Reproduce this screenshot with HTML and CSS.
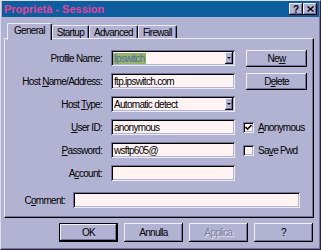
FILE: index.html
```html
<!DOCTYPE html>
<html>
	<head>
		<meta charset="UTF-8">
		<title>Proprietà - Session</title>
		<link rel="stylesheet" href="styles.css">
	</head>
	<body>
		<div class="window">
			<div class="titlebar">
				<span class="title">Proprietà - Session</span>
				<span class="capbtn">?</span>
				<span class="capbtn">
					<svg width="7" height="6" viewBox="0 0 7 6"><path d="M0.5 0.5 L6.5 5.5 M6.5 0.5 L0.5 5.5" stroke="#000" stroke-width="1.4" fill="none"/></svg>
				</span>
			</div>

			<div class="tabs">
				<span class="tab active">General</span>
				<span class="tab">Startup</span>
				<span class="tab">Advanced</span>
				<span class="tab">Firewall</span>
			</div>

			<div class="panel">
				<div class="row">
					<span class="lbl">Profile Name:</span>
					<div class="field combo"><span class="sel">Ipswitch</span><span class="drop"></span></div>
					<span class="btn side">Ne<u>w</u></span>
				</div>
				<div class="row">
					<span class="lbl">Host <u>N</u>ame/Address:</span>
					<div class="field">ftp.ipswitch.com</div>
					<span class="btn side">D<u>e</u>lete</span>
				</div>
				<div class="row">
					<span class="lbl">Host <u>T</u>ype:</span>
					<div class="field combo">Automatic detect<span class="drop"></span></div>
				</div>
				<div class="row">
					<span class="lbl"><u>U</u>ser ID:</span>
					<div class="field">anonymous</div>
					<span class="check">
						<span class="box"><svg width="7" height="7" viewBox="0 0 7 7"><path d="M0.5 3 L2.5 5.2 L6.5 1" stroke="#000" stroke-width="1.6" fill="none"/></svg></span>
						<span><u>A</u>nonymous</span>
					</span>
				</div>
				<div class="row">
					<span class="lbl"><u>P</u>assword:</span>
					<div class="field">wsftp605@</div>
					<span class="check">
						<span class="box"></span>
						<span>Sa<u>v</u>e Pwd</span>
					</span>
				</div>
				<div class="row">
					<span class="lbl">A<u>c</u>count:</span>
					<div class="field"></div>
				</div>
				<div class="row comment">
					<span class="lbl">C<u>o</u>mment:</span>
					<div class="field"></div>
				</div>
			</div>

			<div class="buttons">
				<span class="btn default">OK</span>
				<span class="btn">Annulla</span>
				<span class="btn disabled">Applica</span>
				<span class="btn">?</span>
			</div>
		</div>
	</body>
</html>
```

FILE: styles.css
```css
* {
	box-sizing: border-box;
}
html, body {
	margin: 0;
	padding: 0;
}
body {
	background: #b2b2d2;
	font-family: "Liberation Sans", sans-serif;
	font-size: 10px;
	letter-spacing: -0.7px;
	color: #000;
}
u {
	text-decoration: underline;
	text-underline-offset: 1px;
}

.window {
	width: 321px;
	height: 250px;
	padding: 0 1px 1px 1px;
	border: 1px solid;
	border-color: #dcdcee #24243a #24243a #dcdcee;
	box-shadow: inset -1px -1px #74749a;
	display: flex;
	flex-direction: column;
}

/* caption */
.titlebar {
	height: 16px;
	flex: none;
	background: #0c5e9e;
	display: flex;
	align-items: center;
	padding: 0 2px 0 2px;
}
.title {
	flex: 1;
	font-weight: bold;
	font-size: 11px;
	letter-spacing: 0;
	color: #e4449e;
}
.capbtn {
	width: 14px;
	height: 12px;
	display: flex;
	align-items: center;
	justify-content: center;
	background: #b2b2d2;
	font-weight: bold;
	font-size: 10px;
	letter-spacing: 0;
	box-shadow: inset -1px -1px #000, inset 1px 1px #f0f0fa, inset -2px -2px #74749a;
}

/* tabs */
.tabs {
	height: 21px;
	flex: none;
	display: flex;
	align-items: flex-end;
	padding-left: 5px;
}
.tab {
	height: 13px;
	padding: 0 4px;
	display: flex;
	align-items: center;
	border-top: 1px solid #ececf8;
	border-left: 1px solid #ececf8;
	border-right: 1px solid #000;
	border-radius: 2px 2px 0 0;
	box-shadow: inset -1px 0 #74749a;
}
.tab.active {
	height: 17px;
	margin-bottom: -2px;
	padding: 0 6px 3px 6px;
	background: #b2b2d2;
	position: relative;
	z-index: 1;
}

/* page */
.panel {
	flex: none;
	height: 180px;
	margin: 0 5px 0 2px;
	padding-top: 11px;
	border: 1px solid;
	border-color: #ececf8 #000 #000 #ececf8;
	box-shadow: inset -1px -1px #74749a;
	display: flex;
	flex-direction: column;
	gap: 7px;
}
.row {
	height: 16px;
	display: flex;
	align-items: center;
}
.lbl {
	width: 97px;
	margin-right: 9px;
	text-align: right;
	white-space: nowrap;
}
.field {
	width: 124px;
	height: 16px;
	padding: 0 3px;
	display: flex;
	align-items: center;
	background: #fff3f3;
	box-shadow: inset 1px 1px #74749a, inset -1px -1px #ececf8, inset 2px 2px #000, inset -2px -2px #b2b2d2;
	white-space: nowrap;
	overflow: hidden;
}
.combo {
	position: relative;
}
.sel {
	background: #98b26c;
	color: #4d6fa0;
	padding: 0 1px;
	margin-left: -1px;
}
.drop {
	position: absolute;
	right: 2px;
	top: 2px;
	width: 8px;
	height: 12px;
	background: #b2b2d2;
	box-shadow: inset -1px -1px #000, inset 1px 1px #f0f0fa, inset -2px -2px #74749a;
}
.drop::after {
	content: "";
	position: absolute;
	left: 2px;
	top: 5px;
	border-left: 2px solid transparent;
	border-right: 2px solid transparent;
	border-top: 2px solid #000;
}
.comment {
	margin-top: 4px;
}
.comment .lbl {
	width: 60px;
	margin-right: 8px;
}
.comment .field {
	width: 227px;
}

/* buttons */
.btn {
	width: 59px;
	height: 19px;
	display: flex;
	align-items: center;
	justify-content: center;
	background: #b2b2d2;
	box-shadow: inset -1px -1px #000, inset 1px 1px #f0f0fa, inset -2px -2px #74749a;
}
.btn.side {
	width: 61px;
	height: 17px;
	margin-left: 11px;
}
.btn.default {
	border: 1px solid #000;
}
.btn.disabled {
	color: #7c7ca0;
	text-shadow: 1px 1px #e8e8f4;
}
.buttons {
	flex: none;
	display: flex;
	justify-content: flex-end;
	gap: 6px;
	margin-top: 5px;
	padding-right: 6px;
}

/* checkboxes */
.check {
	margin-left: 8px;
	display: flex;
	align-items: center;
	gap: 4px;
}
.box {
	width: 11px;
	height: 11px;
	display: flex;
	align-items: center;
	justify-content: center;
	background: #fff3f3;
	box-shadow: inset 1px 1px #74749a, inset -1px -1px #ececf8, inset 2px 2px #000, inset -2px -2px #b2b2d2;
}
```
